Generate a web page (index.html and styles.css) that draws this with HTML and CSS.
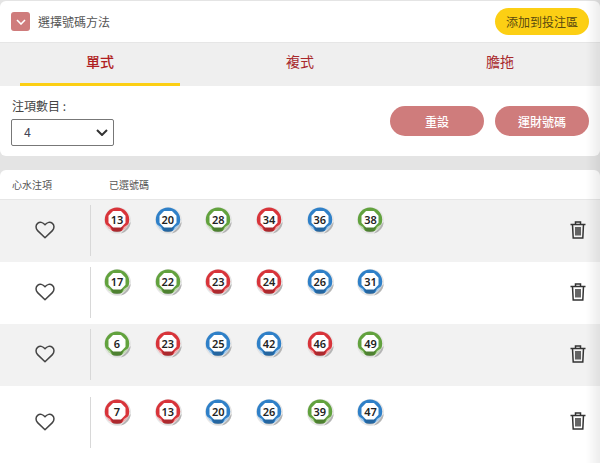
FILE: index.html
```html
<!DOCTYPE html>
<html lang="zh-Hant">
<head>
  <meta charset="UTF-8" />
  <meta name="viewport" content="width=device-width, initial-scale=1.0"/>
  <title>選擇號碼方法</title>
  <link rel="stylesheet" href="styles.css">
</head>
<body>
  <svg class="defs" width="0" height="0" aria-hidden="true">
    <symbol id="ball" viewBox="0 0 27 27">
      <circle cx="13.5" cy="13.5" r="13.5" fill="#e6e6e6"/>
      <path d="M26.8 15 A13.5 13.5 0 0 1 17 26.5 L21 21 Z" fill="#b4b4b4"/>
      <circle cx="13" cy="12.6" r="12.2" fill="currentColor"/>
      <path d="M1.4 17 Q3.6 22.6 8.5 25 L6 20 Z" fill="#fff" opacity=".6"/>
      <path d="M24.6 17 Q22.4 22.6 17.5 25 L20 20 Z" fill="#fff" opacity=".6"/>
      <path d="M7 20 H19 L16.5 25 Q13 25.6 9.5 25 Z" fill="#000" opacity=".2"/>
      <path d="M9.3 4.8 H16.7 L20.8 8.9 V15.6 L16.7 19.8 H9.3 L5.2 15.6 V8.9 Z" fill="#fff" stroke="#fff" stroke-width="1.4" stroke-linejoin="round"/>
    </symbol>
    <symbol id="heart" viewBox="0 0 20 18">
      <path d="M10 16.8 L2.6 9.6 C0.4 7.4 0.6 4.2 2.6 2.4 C4.8 0.6 7.8 1 10 3.8 C12.2 1 15.2 0.6 17.4 2.4 C19.4 4.2 19.6 7.4 17.4 9.6 Z" fill="none" stroke="#444" stroke-width="1.5" stroke-linejoin="round"/>
    </symbol>
    <symbol id="bin" viewBox="0 0 16 18">
      <path d="M0.5 3.5 H15.5 M5.5 3.5 V1 H10.5 V3.5 M2.5 3.5 L3.2 17 H12.8 L13.5 3.5 M6 6 V14.5 M8 6 V14.5 M10 6 V14.5" fill="none" stroke="#333" stroke-width="1.5"/>
    </symbol>
  </svg>

  <div class="card top-card">
    <div class="head">
      <div class="head-left">
        <span class="toggle">
          <svg width="10" height="6" viewBox="0 0 10 6"><path d="M1 1 L5 5 L9 1" fill="none" stroke="#fff" stroke-width="1.6"/></svg>
        </span>
        <span class="head-title">選擇號碼方法</span>
      </div>
      <button class="btn-add">添加到投注區</button>
    </div>

    <div class="tabs">
      <div class="tab active">單式</div>
      <div class="tab">複式</div>
      <div class="tab">膽拖</div>
    </div>

    <div class="form">
      <div class="field">
        <div class="field-label">注項數目 :</div>
        <div class="select">
          <span>4</span>
          <svg width="12" height="7" viewBox="0 0 12 7"><path d="M1 1 L6 6 L11 1" fill="none" stroke="#333" stroke-width="2"/></svg>
        </div>
      </div>
      <div class="actions">
        <button class="btn-soft">重設</button>
        <button class="btn-soft">運財號碼</button>
      </div>
    </div>
  </div>

  <div class="card list-card">
    <div class="list-head">
      <div class="col-fav">心水注項</div>
      <div>已選號碼</div>
    </div>

    <!-- Row 1 -->
    <div class="row">
      <div class="fav"><svg class="heart"><use href="#heart"/></svg></div>
      <div class="balls">
        <div class="ball red"><svg><use href="#ball"/></svg><span>13</span></div>
        <div class="ball blue"><svg><use href="#ball"/></svg><span>20</span></div>
        <div class="ball green"><svg><use href="#ball"/></svg><span>28</span></div>
        <div class="ball red"><svg><use href="#ball"/></svg><span>34</span></div>
        <div class="ball blue"><svg><use href="#ball"/></svg><span>36</span></div>
        <div class="ball green"><svg><use href="#ball"/></svg><span>38</span></div>
      </div>
      <svg class="bin"><use href="#bin"/></svg>
    </div>

    <!-- Row 2 -->
    <div class="row">
      <div class="fav"><svg class="heart"><use href="#heart"/></svg></div>
      <div class="balls">
        <div class="ball green"><svg><use href="#ball"/></svg><span>17</span></div>
        <div class="ball green"><svg><use href="#ball"/></svg><span>22</span></div>
        <div class="ball red"><svg><use href="#ball"/></svg><span>23</span></div>
        <div class="ball red"><svg><use href="#ball"/></svg><span>24</span></div>
        <div class="ball blue"><svg><use href="#ball"/></svg><span>26</span></div>
        <div class="ball blue"><svg><use href="#ball"/></svg><span>31</span></div>
      </div>
      <svg class="bin"><use href="#bin"/></svg>
    </div>

    <!-- Row 3 -->
    <div class="row">
      <div class="fav"><svg class="heart"><use href="#heart"/></svg></div>
      <div class="balls">
        <div class="ball green"><svg><use href="#ball"/></svg><span>6</span></div>
        <div class="ball red"><svg><use href="#ball"/></svg><span>23</span></div>
        <div class="ball blue"><svg><use href="#ball"/></svg><span>25</span></div>
        <div class="ball blue"><svg><use href="#ball"/></svg><span>42</span></div>
        <div class="ball red"><svg><use href="#ball"/></svg><span>46</span></div>
        <div class="ball green"><svg><use href="#ball"/></svg><span>49</span></div>
      </div>
      <svg class="bin"><use href="#bin"/></svg>
    </div>

    <!-- Row 4 -->
    <div class="row">
      <div class="fav"><svg class="heart"><use href="#heart"/></svg></div>
      <div class="balls">
        <div class="ball red"><svg><use href="#ball"/></svg><span>7</span></div>
        <div class="ball red"><svg><use href="#ball"/></svg><span>13</span></div>
        <div class="ball blue"><svg><use href="#ball"/></svg><span>20</span></div>
        <div class="ball blue"><svg><use href="#ball"/></svg><span>26</span></div>
        <div class="ball green"><svg><use href="#ball"/></svg><span>39</span></div>
        <div class="ball blue"><svg><use href="#ball"/></svg><span>47</span></div>
      </div>
      <svg class="bin"><use href="#bin"/></svg>
    </div>
  </div>

  <div class="edge"></div>
</body>
</html>
```

FILE: styles.css
```css
html, body {
  height: 100%;
}

body {
  margin: 0;
  padding-top: 1px;
  box-sizing: border-box;
  overflow: hidden;
  background-color: #e4e4e4;
  font-family: "Noto Sans CJK TC", "Noto Sans", sans-serif;
  color: #333;
}

.defs {
  position: absolute;
}

.edge {
  position: fixed;
  top: 0;
  right: 0;
  bottom: 0;
  width: 14px;
  background: linear-gradient(to right, rgba(0, 0, 0, 0), rgba(0, 0, 0, 0.07));
  pointer-events: none;
}

.card {
  background: #fff;
  border-radius: 6px;
}

.top-card {
  height: 155px;
  margin-bottom: 14px;
  overflow: hidden;
}

.head {
  height: 41px;
  display: flex;
  justify-content: space-between;
  align-items: center;
  padding: 0 11px;
  border-bottom: 1px solid #e6e6e6;
}

.head-left {
  display: flex;
  align-items: center;
  gap: 8px;
}

.toggle {
  width: 19px;
  height: 19px;
  border-radius: 3px;
  background-color: #cf7c7c;
  display: flex;
  align-items: center;
  justify-content: center;
}

.head-title {
  font-size: 12px;
  color: #555;
}

.btn-add {
  width: 94px;
  height: 27px;
  border: none;
  border-radius: 14px;
  padding: 0;
  background-color: #fccf14;
  color: #5a4a10;
  font-family: inherit;
  font-size: 12px;
}

.tabs {
  height: 43px;
  display: grid;
  grid-template-columns: repeat(3, 1fr);
  background-color: #efefef;
}

.tab {
  display: flex;
  align-items: center;
  justify-content: center;
  padding-bottom: 7px;
  font-size: 14px;
  color: #a8282c;
  position: relative;
}

.tab.active {
  font-weight: 500;
  color: #b01e22;
}

.tab.active::after {
  content: "";
  position: absolute;
  left: 20px;
  right: 20px;
  bottom: 0;
  height: 3px;
  background-color: #fccf14;
}

.form {
  display: flex;
  justify-content: space-between;
  padding: 11px 11px 0;
}

.field-label {
  font-size: 12px;
  line-height: 17px;
  color: #444;
  margin-bottom: 5px;
  padding-left: 1px;
}

.select {
  width: 103px;
  height: 27px;
  box-sizing: border-box;
  border: 1px solid #777;
  border-radius: 2px;
  display: flex;
  align-items: center;
  justify-content: space-between;
  padding: 0 5px 0 12px;
  font-family: "Roboto", sans-serif;
  font-size: 12px;
  color: #445;
}

.actions {
  display: flex;
  gap: 11px;
  padding-top: 9px;
}

.btn-soft {
  width: 94px;
  height: 30px;
  border: none;
  border-radius: 15px;
  padding: 0;
  background-color: #cf7c7c;
  color: #fff;
  font-family: inherit;
  font-size: 12px;
  font-weight: 500;
}

.list-head {
  height: 30px;
  display: flex;
  align-items: center;
  padding-left: 12px;
  font-size: 10px;
  color: #555;
  border-bottom: 1px solid #e6e6e6;
  box-sizing: border-box;
}

.col-fav {
  width: 97px;
}

.row {
  height: 62px;
  display: flex;
  background-color: #fff;
}

.row:nth-of-type(even) {
  background-color: #f2f2f2;
}

.row:last-of-type {
  height: 77px;
}

.fav {
  width: 90px;
  height: 51px;
  margin-top: 5px;
  border-right: 1px solid #d8d8d8;
  display: flex;
  align-items: center;
  justify-content: center;
  flex-shrink: 0;
}

.row:last-of-type .fav {
  margin-top: 11px;
}

.heart {
  width: 20px;
  height: 18px;
  margin-bottom: 2px;
}

.balls {
  display: flex;
  gap: 23.7px;
  padding: 7px 0 0 13px;
}

.row:last-of-type .balls {
  padding-top: 13px;
}

.ball {
  width: 27px;
  height: 27px;
  display: grid;
  place-items: center;
}

.ball svg {
  width: 27px;
  height: 27px;
  grid-area: 1 / 1;
}

.ball span {
  grid-area: 1 / 1;
  margin: -2px 1px 0 0;
  font-family: "Noto Sans", sans-serif;
  font-size: 11px;
  font-weight: 600;
  color: #222;
}

.ball.red { color: #d8343a; }
.ball.blue { color: #2f80c8; }
.ball.green { color: #62a23e; }

.bin {
  width: 16px;
  height: 18px;
  margin: 21px 14px 0 auto;
}

.row:last-of-type .bin {
  margin-top: 26px;
}
```
